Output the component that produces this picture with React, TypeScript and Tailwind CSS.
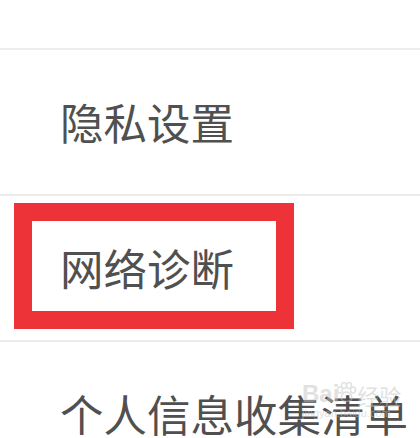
import React from "react";

const font = { fontFamily: '"Noto Sans CJK SC", "Noto Sans", sans-serif' };

function Row({ label, children }: { label: string; children?: React.ReactNode }) {
  return (
    <div className="relative flex h-[146px] items-center border-b-2 border-[#ededed] pl-[60px]">
      {children}
      <span className="relative text-[43.5px] leading-none text-[#505050]" style={font}>
        {label}
      </span>
    </div>
  );
}

export default function App() {
  return (
    <div className="relative h-[438px] w-[420px] overflow-hidden bg-white" style={font}>
      <div className="h-[50px] border-b-2 border-[#ededed]" />
      <Row label="隐私设置" />
      <Row label="网络诊断">
        <div className="absolute left-[14px] top-[7px] h-[126px] w-[280px] border-[18px] border-[#ee3338]" />
      </Row>
      <Row label="个人信息收集清单" />
      <div className="pointer-events-none absolute left-[302px] top-[382px] flex flex-col items-start text-[#c4c4c4] opacity-50">
        <div className="flex items-end">
          <span className="text-[24px] font-bold leading-none" style={{ fontFamily: '"Liberation Sans", sans-serif' }}>Bai</span>
          <svg width="22" height="22" viewBox="0 0 22 22" className="-ml-[4px] mb-[2px]">
            <g fill="none" stroke="#c4c4c4" strokeWidth="1.5">
              <ellipse cx="5" cy="8" rx="2.5" ry="3" />
              <ellipse cx="9" cy="3.5" rx="2.5" ry="3" />
              <ellipse cx="14" cy="3.5" rx="2.5" ry="3" />
              <ellipse cx="18" cy="8" rx="2.5" ry="3" />
              <path d="M11.5 10 C7 10 5 16 7 18 C9 20 14 20 16 18 C18 16 16 10 11.5 10 Z" />
            </g>
          </svg>
          <span className="text-[22px] leading-none">经验</span>
        </div>
        <span className="mt-[2px] text-[11px] leading-none" style={{ fontFamily: '"Liberation Sans", sans-serif' }}>jingyan.baidu.com</span>
      </div>
    </div>
  );
}
